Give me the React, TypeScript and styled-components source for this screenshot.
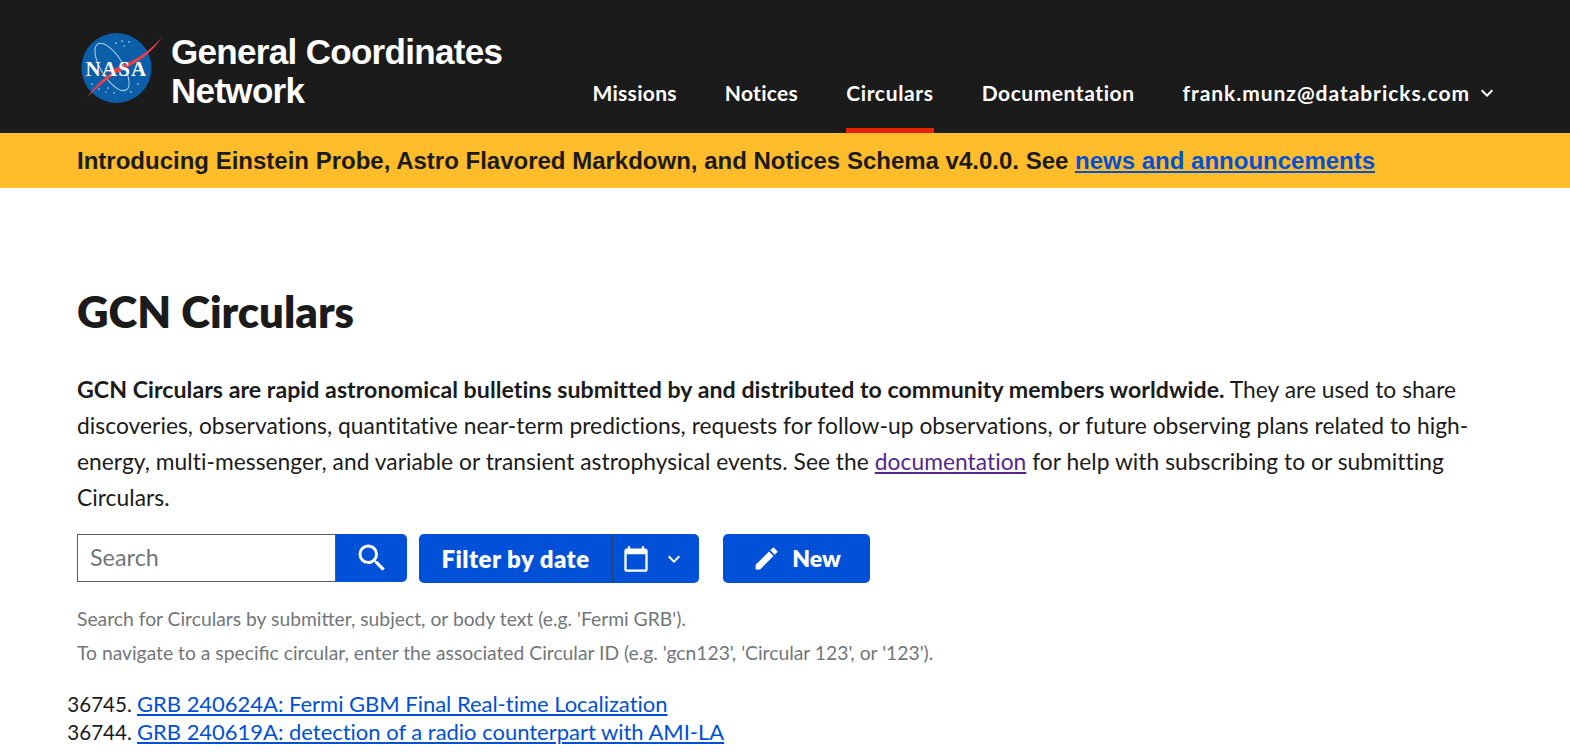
import React from "react";
import styled, { createGlobalStyle } from "styled-components";
import { MdSearch, MdCalendarToday, MdEdit, MdExpandMore } from "react-icons/md";

const Global = createGlobalStyle`
  html, body { margin: 0; padding: 0; height: 752px; overflow: hidden; background: #fff; }
  body { font-family: "Lato", "Noto Sans", sans-serif; color: #1b1b1b; }
`;

const sans = `"Lato", "Noto Sans", sans-serif`;

const Header = styled.header`
  height: 133px;
  background: #1b1b1b;
  display: flex;
  padding: 0 71px 0 78px;
  box-sizing: border-box;
`;
const Brand = styled.div`
  display: flex;
  align-items: flex-start;
  gap: 9px;
  padding-top: 32px;
  flex: 1;
`;
const Title = styled.div`
  font: 700 35px/39px "Liberation Sans", Arial, sans-serif;
  letter-spacing: -0.68px;
  color: #fff;
`;
const Nav = styled.nav`
  display: flex;
  align-items: stretch;
  gap: 48px;
`;
const NavItem = styled.a<{ $active?: boolean; $ls?: number }>`
  display: flex;
  align-items: center;
  gap: 5px;
  height: 133px;
  box-sizing: border-box;
  padding-top: 60px;
  padding-bottom: 2px;
  font: 700 21px/24px ${sans};
  letter-spacing: ${(p) => p.$ls ?? 0.3}px;
  color: #fff;
  border-bottom: 5px solid ${(p) => (p.$active ? "#e52207" : "transparent")};
`;
const Banner = styled.div`
  height: 55px;
  background: #ffbc2b;
  padding: 0 77px;
  display: flex;
  align-items: center;
  font: 700 24px/28px "Liberation Sans", Arial, sans-serif;
  color: #1b1b1b;
  white-space: pre;
  a { color: #0050d8; text-decoration: underline; }
`;
const Main = styled.main`
  padding: 97px 78px 0 77px;
`;
const H1 = styled.h1`
  margin: 0;
  font: 800 43.7px/52px ${sans};
`;
const Lead = styled.p`
  margin: 34px 0 0;
  font: 400 22.77px/36px ${sans};
  letter-spacing: 0.04px;
  b { font-weight: 700; font-size: 23.15px; }
  a { color: #54278f; text-decoration: underline; }
`;
const Toolbar = styled.div`
  display: flex;
  margin-top: 18px;
  height: 49px;
  align-items: stretch;
`;
const SearchInput = styled.div`
  width: 259px;
  height: 48px;
  box-sizing: border-box;
  border: 1px solid #565c65;
  padding: 0 12px;
  display: flex;
  align-items: center;
  font: 400 23.4px/1 ${sans};
  color: #71767a;
  background: #fff;
`;
const Blue = styled.button`
  background: #0050d8;
  color: #fff;
  border: 0;
  padding: 0;
  display: flex;
  align-items: center;
  font: 800 24px/1 ${sans};
`;
const SearchBtn = styled(Blue)`
  width: 71px;
  height: 48px;
  justify-content: center;
  border-radius: 0 5px 5px 0;
`;
const DateBtn = styled(Blue)`
  margin-left: 12px;
  width: 280px;
  border-radius: 5px;
`;
const DateLabel = styled.span`
  flex: 0 0 194px;
  box-sizing: border-box;
  align-self: stretch;
  display: flex;
  align-items: center;
  justify-content: center;
  letter-spacing: 0.45px;
  border-right: 1px solid #24406f;
`;
const DateIcons = styled.span`
  flex: 1;
  display: flex;
  align-items: center;
  padding-left: 9px;
  gap: 12px;
`;
const NewBtn = styled(Blue)`
  margin-left: 24px;
  width: 147px;
  border-radius: 5px;
  justify-content: center;
  gap: 11px;
  font-size: 23px;
`;
const Hint = styled.div`
  margin-top: 19px;
  font: 400 19.3px/34px ${sans};
  color: #71767a;
`;
const List = styled.ol`
  margin: 20px 0 0;
  padding: 0 0 0 60px;
  font: 400 22px/28px ${sans};
  letter-spacing: -0.02px;
  list-style-position: outside;
  li::marker { font-size: 20.6px; }
  a { color: #0050d8; text-decoration: underline; }
`;

const NasaLogo = () => (
  <svg width="84" height="72" viewBox="0 0 84 72" style={{ flex: "none" }}>
    <circle cx="38.5" cy="36" r="35" fill="#0b5ea8" />
    <g fill="#fff">
      <circle cx="38" cy="11" r=".8" /><circle cx="44" cy="9" r=".7" /><circle cx="51" cy="10" r=".7" /><circle cx="46" cy="14" r=".7" />
      <circle cx="14" cy="52" r=".7" /><circle cx="21" cy="57" r=".7" /><circle cx="30" cy="56" r=".7" /><circle cx="36" cy="61" r=".7" /><circle cx="60" cy="52" r=".7" /><circle cx="53" cy="60" r=".7" /><circle cx="28" cy="60" r=".6" /><circle cx="46" cy="58" r=".6" />
    </g>
    <ellipse cx="34" cy="35" rx="11" ry="27" transform="rotate(-32 34 35)" fill="none" stroke="#b9d7ea" strokeWidth="1" />
    <path d="M0 46 C24 42 62 32 84 5 C72 24 56 32 44 38 C30 46 18 56 9 66 C18 52 28 44 38 38 C26 41 12 43 0 46 Z" fill="#e8404a" />
    <text x="38.5" y="43.5" textAnchor="middle" fill="#fff" fontFamily="Liberation Serif, serif" fontWeight="700" fontSize="21" letterSpacing="1.2">NASA</text>
  </svg>
);

export default function App() {
  return (
    <>
      <Global />
      <Header>
        <Brand>
          <NasaLogo />
          <Title>General Coordinates<br />Network</Title>
        </Brand>
        <Nav>
          <NavItem>Missions</NavItem>
          <NavItem>Notices</NavItem>
          <NavItem $active $ls={0.65}>Circulars</NavItem>
          <NavItem $ls={0.55}>Documentation</NavItem>
          <NavItem $ls={0.95}>frank.munz@databricks.com<MdExpandMore size={24} /></NavItem>
        </Nav>
      </Header>
      <Banner>Introducing Einstein Probe, Astro Flavored Markdown, and Notices Schema v4.0.0. See <a>news and announcements</a></Banner>
      <Main>
        <H1>GCN Circulars</H1>
        <Lead>
          <b>GCN Circulars are rapid astronomical bulletins submitted by and distributed to community members worldwide.</b> They are used to share discoveries, observations, quantitative near-term predictions, requests for follow-up observations, or future observing plans related to high-energy, multi-messenger, and variable or transient astrophysical events. See the <a>documentation</a> for help with subscribing to or submitting Circulars.
        </Lead>
        <Toolbar>
          <SearchInput>Search</SearchInput>
          <SearchBtn><MdSearch size={36} /></SearchBtn>
          <DateBtn>
            <DateLabel>Filter by date</DateLabel>
            <DateIcons><MdCalendarToday size={28} /><MdExpandMore size={24} /></DateIcons>
          </DateBtn>
          <NewBtn><MdEdit size={29} />New</NewBtn>
        </Toolbar>
        <Hint>
          Search for Circulars by submitter, subject, or body text (e.g. 'Fermi GRB').<br />
          To navigate to a specific circular, enter the associated Circular ID (e.g. 'gcn123', 'Circular 123', or '123').
        </Hint>
        <List>
          <li value={36745}><a>GRB 240624A: Fermi GBM Final Real-time Localization</a></li>
          <li value={36744}><a>GRB 240619A: detection of a radio counterpart with AMI-LA</a></li>
          <li value={36743}><a>EP240618a: Swift detection of a burst</a></li>
        </List>
      </Main>
    </>
  );
}
